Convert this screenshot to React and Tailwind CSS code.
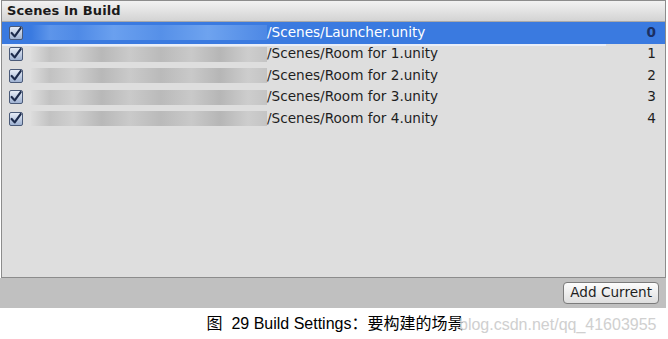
import React from "react";

const Check = () => (
  <div className="w-[14px] h-[14px] rounded-[2px] border border-[#4a5a78] bg-[linear-gradient(#e6ecf6,#9fb2d2)] flex items-center justify-center shrink-0">
    <svg width="12" height="12" viewBox="0 0 11 11">
      <path d="M1.5 5.5 L4.3 8.6 L9.8 1" fill="none" stroke="#1d2b4c" strokeWidth="2" strokeLinecap="round" strokeLinejoin="round" />
    </svg>
  </div>
);

const rows = [
  { path: "/Scenes/Launcher.unity", n: "0" },
  { path: "/Scenes/Room for 1.unity", n: "1" },
  { path: "/Scenes/Room for 2.unity", n: "2" },
  { path: "/Scenes/Room for 3.unity", n: "3" },
  { path: "/Scenes/Room for 4.unity", n: "4" },
];

export default function App() {
  return (
    <div className="w-[668px] h-[339px] bg-white overflow-hidden font-['DejaVu_Sans',sans-serif]">
      <div className="ml-[1px] w-[665px] h-[278px] border border-[#8c8c8c] bg-[#dedede] flex flex-col">
        <div className="h-[21px] shrink-0 border-b border-[#a9a9a9] bg-[linear-gradient(#f2f2f2,#d3d3d3)] flex items-center pl-[5px]">
          <span className="text-[13px] font-bold text-[#1a1a1a] tracking-[0.1px]">Scenes In Build</span>
        </div>
        <div className="flex flex-col">
          {rows.map((r, i) => {
            const sel = i === 0;
            return (
              <div key={i} className={"relative h-[21.5px] flex items-center pl-[7px] pr-[9px] " + (sel ? "bg-[#3a7ae0]" : "")}>
                <Check />
                <div className={"ml-[8px] w-[236px] h-[15px] " + (sel ? "bg-[linear-gradient(90deg,#3a7ae0,#5d95ea_8%,#4f8ae6_20%,#6aa0ef_35%,#5690e8_55%,#6ea3ef_75%,#4d88e5_100%)]" : "bg-[linear-gradient(90deg,#dcdcdc,#c2c2c2_8%,#d0d0d0_18%,#b8b8b8_30%,#cacaca_42%,#bababa_55%,#c9c9c9_68%,#b6b6b6_80%,#cdcdcd_92%,#c4c4c4)]")} />
                <span className={"text-[13.6px] leading-none " + (sel ? "text-white" : "text-[#1e1e1e]")}>{r.path}</span>
                <span className={"ml-auto text-[13.6px] leading-none " + (sel ? "text-[#1b2f63] font-bold" : "text-[#1e1e1e]")}>{r.n}</span>
                {sel && <div className="absolute left-0 bottom-[-2px] w-[604px] h-[2px] bg-[#e9eef8]" />}
              </div>
            );
          })}
        </div>
      </div>
      <div className="w-[666px] h-[30px] bg-[#c0c0c0] flex items-center justify-end pr-[7px]">
        <button className="h-[22px] px-[6px] rounded-[4px] border border-[#7b7b7b] bg-[linear-gradient(#fdfdfd,#dedede)] text-[13.6px] text-[#1e1e1e] leading-none">
          Add Current
        </button>
      </div>
      <div className="relative h-[31px] flex items-center justify-center">
        <span className="ml-[2px] text-[16px] text-black font-['Liberation_Sans','Noto_Sans_CJK_SC',sans-serif]">
          图&nbsp;&nbsp;29 Build Settings：要构建的场景
        </span>
        <span className="absolute left-[459px] top-[5px] text-[16px] text-[#cbcbcb] font-['Liberation_Sans',sans-serif] opacity-90">
          blog.csdn.net/qq_41603955
        </span>
      </div>
    </div>
  );
}
